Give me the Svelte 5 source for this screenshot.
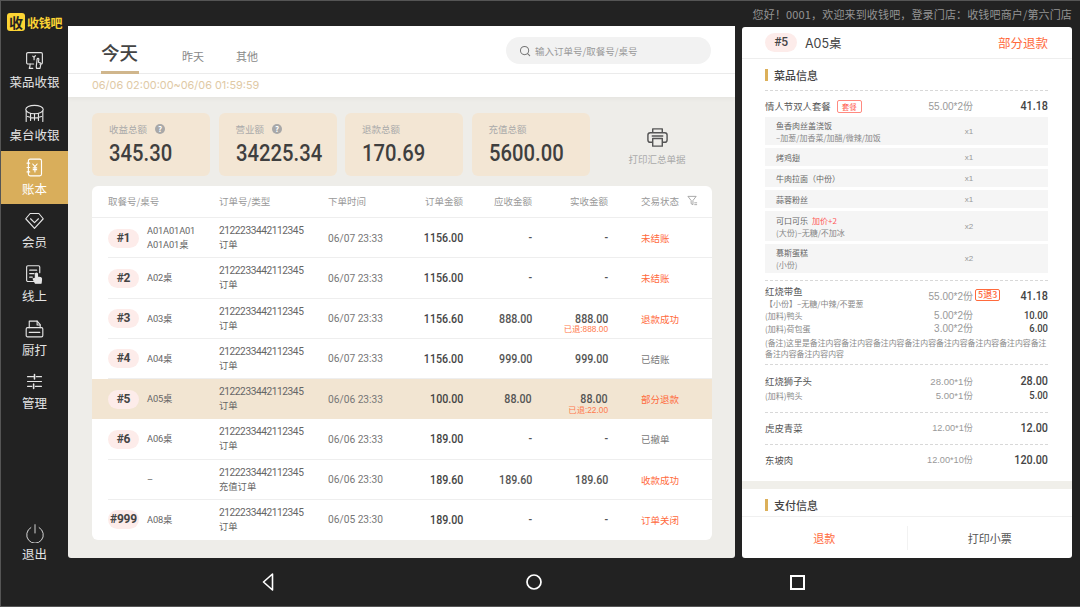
<script>
  const nav = [
    { key: 'dish', label: '菜品收银' },
    { key: 'table', label: '桌台收银' },
    { key: 'book', label: '账本', active: true },
    { key: 'vip', label: '会员' },
    { key: 'online', label: '线上' },
    { key: 'print', label: '厨打' },
    { key: 'manage', label: '管理' }
  ];
  const stats = [
    { label: '收益总额', value: '345.30', help: true },
    { label: '营业额', value: '34225.34', help: true },
    { label: '退款总额', value: '170.69' },
    { label: '充值总额', value: '5600.00' }
  ];
  const orderNo = '2122233442112345';
  const rows = [
    { no: '#1', name: 'A01A01A01', name2: 'A01A01桌', type: '订单', time: '06/07 23:33', amount: '1156.00', due: '-', paid: '-', status: '未结账', hot: true },
    { no: '#2', name: 'A02桌', type: '订单', time: '06/07 23:33', amount: '1156.00', due: '-', paid: '-', status: '未结账', hot: true },
    { no: '#3', name: 'A03桌', type: '订单', time: '06/07 23:33', amount: '1156.60', due: '888.00', paid: '888.00', refund: '已退:888.00', status: '退款成功', hot: true },
    { no: '#4', name: 'A04桌', type: '订单', time: '06/07 23:33', amount: '1156.00', due: '999.00', paid: '999.00', status: '已结账' },
    { no: '#5', name: 'A05桌', type: '订单', time: '06/06 23:33', amount: '100.00', due: '88.00', paid: '88.00', refund: '已退:22.00', status: '部分退款', hot: true, selected: true },
    { no: '#6', name: 'A06桌', type: '订单', time: '06/06 23:33', amount: '189.00', due: '-', paid: '-', status: '已撤单' },
    { no: '', name: '–', type: '充值订单', time: '06/06 23:30', amount: '189.60', due: '189.60', paid: '189.60', status: '收款成功', hot: true },
    { no: '#999', name: 'A08桌', type: '订单', time: '06/05 23:30', amount: '189.00', due: '-', paid: '-', status: '订单关闭', hot: true }
  ];
  const setItems = [
    { name: '鱼香肉丝盖浇饭', sub: '–加葱/加香菜/加醋/微辣/加饭', qty: 'x1' },
    { name: '烤鸡翅', qty: 'x1' },
    { name: '牛肉拉面（中份）', qty: 'x1' },
    { name: '蒜蓉粉丝', qty: 'x1' },
    { name: '可口可乐', extra: '加价+2', sub: '(大份)–无糖/不加冰', qty: 'x2' },
    { name: '慕斯蛋糕', sub: '(小份)', qty: 'x2' }
  ];
</script>

<div class="screen">
  <aside class="side">
    <div class="logo"><span class="logo-mark">收</span><span class="logo-text">收钱吧</span></div>
    <nav class="nav">
      {#each nav as item}
        <div class="nav-item" class:active={item.active}>
          <svg class="nav-icon" viewBox="0 0 24 24" fill="none" stroke="currentColor" stroke-width="1.3" stroke-linecap="round" stroke-linejoin="round">
            {#if item.key === 'dish'}
              <path d="M11 16H4.500A1.500 1.500 0 0 1 3 14.500v-10A1.500 1.500 0 0 1 4.500 3h15A1.500 1.500 0 0 1 21 4.500v10a1.500 1.500 0 0 1-1.500 1.500H18" />
              <path d="M6 21c1-2 1-3 1-5M7 21h3" />
              <path d="M14 19l1-8.500a1 1 0 0 1 2 0L16.500 14l2 .5c.8.2 1 .8.800 1.500l-1 5h-4z" />
              <path d="M10 7l1.500 1.500M13 6.500l-1.500 2M11.500 8.500v2.500" />
            {:else if item.key === 'table'}
              <ellipse cx="12" cy="7.500" rx="10" ry="4.800" />
              <path d="M2.500 9v12M21.500 9v12M7.500 12v8M12 12.500v7M16.500 12v8M4 15.500c4.500 1.800 11.500 1.800 16 0" />
            {:else if item.key === 'book'}
              <rect x="5" y="2.500" width="15" height="19" rx="2" />
              <path d="M3.500 7h3M3.500 12h3M3.500 17h3" />
              <path d="M10 8l2.500 3L15 8M12.500 11v6M10.500 12.500h4M10.500 14.500h4" />
            {:else if item.key === 'vip'}
              <path d="M7 4h10l5 6-10 11L2 10z" />
              <path d="M7.500 10l4.500 4.500 4.500-4.500" />
            {:else if item.key === 'online'}
              <path d="M11 20H4.500A1.500 1.500 0 0 1 3 18.500v-15A1.500 1.500 0 0 1 4.500 2h12A1.500 1.500 0 0 1 18 3.500V10" />
              <path d="M6.500 7h8M6.500 11h5M6.500 15h3" />
              <path d="M13 22l-2.500-5 1.500-.5 1 1V11.500a1.200 1.200 0 0 1 2.400 0V15l3.300.6c1 .2 1.500 1 1.300 2L19.500 22z" fill="currentColor" />
            {:else if item.key === 'print'}
              <path d="M6 11V3.500h9l3.500 4V11" />
              <path d="M15 3.500V8h3.500" />
              <path d="M2.500 12.500A1.500 1.500 0 0 1 4 11h16a1.500 1.500 0 0 1 1.500 1.500V20a1.500 1.500 0 0 1-1.500 1.500H4A1.500 1.500 0 0 1 2.500 20z" />
              <path d="M6 16.500h12" />
            {:else}
              <path d="M4 6.500h7M14 6.500h6M4 17.500h5M13 17.500h7M4 12h16" />
              <path d="M12 4v5M11 15v5" stroke-width="1.800" />
            {/if}
          </svg>
          <span class="nav-label">{item.label}</span>
        </div>
      {/each}
    </nav>
    <div class="nav-item logout">
      <svg class="nav-icon" viewBox="0 0 24 24" fill="none" stroke="currentColor" stroke-width="1.100" stroke-linecap="round">
        <path d="M7 5.500a10 10 0 1 0 10 0" />
        <path d="M12 2v10" />
      </svg>
      <span class="nav-label">退出</span>
    </div>
  </aside>

  <header class="topbar">您好！0001，欢迎来到收钱吧，登录门店：收钱吧商户/第六门店</header>

  <main class="main">
    <section class="head">
      <div class="tabs">
        <div class="tab current">今天</div>
        <div class="tab">昨天</div>
        <div class="tab">其他</div>
        <div class="search">
          <svg class="search-icon" viewBox="0 0 14 14" fill="none" stroke="#777" stroke-width="1.200" stroke-linecap="round"><circle cx="6.500" cy="6.500" r="4.800" /><path d="M10 10l2.500 2.500" /></svg>
          <span>输入订单号/取餐号/桌号</span>
        </div>
      </div>
      <div class="range">06/06 02:00:00~06/06 01:59:59</div>
    </section>

    <section class="content">
      <div class="stats">
        {#each stats as s}
          <div class="stat">
            <div class="stat-label">{s.label}{#if s.help}<span class="help">?</span>{/if}</div>
            <div class="stat-value">{s.value}</div>
          </div>
        {/each}
        <div class="summary">
          <svg class="summary-icon" viewBox="0 0 24 24" fill="none" stroke="#555" stroke-width="1.500" stroke-linejoin="round"><path d="M7 7V3h10v4" /><rect x="2" y="7" width="20" height="10" rx="2.500" /><rect x="7" y="13" width="10" height="8" fill="#eeede9" /><path d="M6 10.500h12" /></svg>
          <span>打印汇总单据</span>
        </div>
      </div>

      <div class="table">
        <div class="grid thead">
          <span>取餐号/桌号</span>
          <span>订单号/类型</span>
          <span>下单时间</span>
          <span class="r">订单金额</span>
          <span class="r">应收金额</span>
          <span class="r">实收金额</span>
          <span class="status-head">交易状态
            <svg class="filter" viewBox="0 0 12 12" fill="none" stroke="#999" stroke-width=".9" stroke-linejoin="round"><path d="M1 1.500h9L6.500 6v4.500L4.500 9.500V6z" /><path d="M8 8.500h3M8 10.500h3" /></svg>
          </span>
        </div>
        {#each rows as r}
          <div class="grid row" class:selected={r.selected}>
            <div class="who">
              <span class="badge" class:empty={!r.no}>{r.no}</span>
              <span class="who-name">{r.name}{#if r.name2}<br />{r.name2}{/if}</span>
            </div>
            <div class="order">{orderNo}<br /><span class="order-type">{r.type}</span></div>
            <div class="time">{r.time}</div>
            <div class="num strong"><span>{r.amount}</span></div>
            <div class="num"><span>{r.due}</span></div>
            <div class="num paid">
              <span>{r.paid}</span>
              {#if r.refund}<small>{r.refund}</small>{/if}
            </div>
            <div class="status" class:hot={r.hot}>{r.status}</div>
          </div>
        {/each}
      </div>
    </section>
  </main>

  <aside class="detail">
    <div class="detail-head">
      <span class="badge wide">#5</span>
      <span class="detail-name">A05桌</span>
      <span class="detail-state">部分退款</span>
    </div>
    <div class="detail-body">
      <div class="pad">
        <h3 class="sec-title">菜品信息</h3>
        <div class="dish-list first">
          <div class="line top-line">
            <span class="d-name">情人节双人套餐<em class="tag">套餐</em></span>
            <span class="d-price">55.00*2份</span>
            <span class="d-total">41.18</span>
          </div>
          {#each setItems as it}
            <div class="set-item" class:tall={it.sub && it.extra} class:mid={it.sub && !it.extra}>
              <div class="set-text">
                <div>{it.name}{#if it.extra}<em class="extra">{it.extra}</em>{/if}</div>
                {#if it.sub}<div class="set-sub">{it.sub}</div>{/if}
              </div>
              <span class="set-qty">{it.qty}</span>
            </div>
          {/each}
        </div>

        <div class="dish-list fish-list">
          <div class="line fish">
            <div class="d-name">红烧带鱼<div class="d-sub">【小份】–无糖/中辣/不要葱</div></div>
            <span class="d-price">55.00*2份<em class="tag-refund">5退3</em></span>
            <span class="d-total">41.18</span>
          </div>
          <div class="line addon"><span class="d-sub">(加料)鸭头</span><span class="d-price">5.00*2份</span><span class="d-total">10.00</span></div>
          <div class="line addon"><span class="d-sub">(加料)荷包蛋</span><span class="d-price">3.00*2份</span><span class="d-total">6.00</span></div>
          <p class="memo">(备注)这里是备注内容备注内容备注内容备注内容备注内容备注内容备注内容备注<br />备注内容备注内容内容</p>
        </div>

        <div class="dish-list lion-list">
          <div class="line"><span class="d-name">红烧狮子头</span><span class="d-price mid-price">28.00*1份</span><span class="d-total">28.00</span></div>
          <div class="line addon gap"><span class="d-sub">(加料)鸭头</span><span class="d-price mid-price">5.00*1份</span><span class="d-total">5.00</span></div>
        </div>

        <div class="dish-list plain">
          <div class="line"><span class="d-name">虎皮青菜</span><span class="d-price small-price">12.00*1份</span><span class="d-total">12.00</span></div>
        </div>
        <div class="dish-list plain last">
          <div class="line"><span class="d-name">东坡肉</span><span class="d-price small-price">12.00*10份</span><span class="d-total">120.00</span></div>
        </div>
      </div>
      <div class="band"></div>
      <div class="pad"><h3 class="sec-title">支付信息</h3></div>
    </div>
    <div class="detail-foot">
      <button class="foot-btn hot">退款</button>
      <button class="foot-btn">打印小票</button>
    </div>
  </aside>

  <footer class="sysbar">
    <svg class="sys-back" viewBox="0 0 12 18" fill="none" stroke="#fff" stroke-width="1.600" stroke-linejoin="round"><path d="M10.500 1L1.500 9l9 8z" /></svg>
    <svg class="sys-home" viewBox="0 0 16 16" fill="none" stroke="#fff" stroke-width="1.700"><circle cx="8" cy="8" r="7" /></svg>
    <span class="sys-recent"></span>
  </footer>
</div>

<style>
  :global(body) { margin: 0; background: #222; }
  .screen {
    box-sizing: border-box;
    width: 1080px;
    height: 607px;
    overflow: hidden;
    background: #222;
    border: 1px solid #555;
    border-right: 0;
    display: grid;
    grid-template-columns: 67px 667px 330px 1fr;
    grid-template-rows: 26px 531px 1fr;
    font-family: "Noto Sans CJK SC", "Noto Sans", sans-serif;
    color: #444;
  }
  .side { grid-row: 1 / 3; grid-column: 1; display: flex; flex-direction: column; }
  .logo { display: flex; align-items: center; gap: 2px; padding: 9px 0 0 6px; height: 33px; box-sizing: border-box; flex: none; }
  .logo-mark { width: 18px; height: 18px; border-radius: 3px; background: #fcd434; color: #222; font-size: 14px; font-weight: 700; line-height: 18px; text-align: center; }
  .logo-text { color: #fcd434; font-size: 12px; font-weight: 700; letter-spacing: -.2px; }
  .nav { display: flex; flex-direction: column; margin-top: 9.600px; }
  .nav-item { height: 53.600px; flex: none; display: flex; flex-direction: column; align-items: center; color: #e4e4e4; }
  .nav-item.active { background: #d9ae5b; color: #fff; }
  .nav-icon { width: 21px; height: 21px; margin-top: 6px; display: block; }
  .nav-label { font-size: 12.500px; line-height: 15px; margin-top: 3px; white-space: nowrap; }
  .logout { margin-top: auto; margin-bottom: -10px; }
  .logout .nav-icon { width: 20px; height: 20px; margin-top: 9px; }

  .topbar { grid-column: 2 / 5; grid-row: 1; color: #949494; font-size: 11px; letter-spacing: .15px; text-align: right; line-height: 26px; white-space: nowrap; padding-right: 8px; }

  .main { grid-column: 2; grid-row: 2; display: flex; flex-direction: column; background: #eeede9; border-radius: 0 0 3px 3px; overflow: hidden; margin-top: -1px; }
  .head { background: #fff; box-shadow: 0 2px 4px rgba(0,0,0,.04); height: 71px; flex: none; }
  .tabs { height: 48px; box-sizing: border-box; border-bottom: 1px solid #ebebeb; display: flex; align-items: flex-end; padding-left: 33px; gap: 31px; }
  .tab { font-size: 11px; color: #888; line-height: 38px; margin-right: 1px; margin-bottom: -2px; }
  .tab.current { font-size: 18.500px; font-weight: 500; color: #444; width: 38px; line-height: 34px; height: 36px; border-bottom: 3px solid #d0b68c; margin-right: 12px; margin-bottom: -1px; white-space: nowrap; }
  .search { margin-left: auto; margin-right: 24px; margin-bottom: 9px; width: 205px; height: 27px; border-radius: 14px; background: #f2f2f2; display: flex; align-items: center; gap: 4px; padding: 0 0 0 13px; box-sizing: border-box; font-size: 9.500px; color: #999; }
  .search-icon { width: 12px; height: 12px; }
  .range { padding-left: 24px; font-family: "Inter", "Noto Sans", sans-serif; font-size: 10.900px; color: #e0c9a5; line-height: 23px; white-space: nowrap; }

  .content { padding: 16px 23px 18px 24px; display: flex; flex-direction: column; gap: 10px; flex: 1; min-height: 0; }
  .stats { display: flex; gap: 8.500px; height: 63px; flex: none; }
  .stat { width: 118px; flex: none; background: #f3e6d4; border-radius: 6px; padding: 9px 0 0 17px; box-sizing: border-box; }
  .stat-label { font-size: 9.500px; line-height: 14px; color: #aaa; display: flex; align-items: center; gap: 8px; }
  .help { width: 10px; height: 10px; border-radius: 50%; background: #a8a8a8; color: #fff; font-size: 8px; line-height: 10px; text-align: center; font-weight: 700; }
  .stat-value { font-family: "Roboto", sans-serif; font-weight: 500; font-size: 23px; line-height: 30px; color: #3f3f3f; margin-top: 3px; transform: scaleX(.88); transform-origin: left center; white-space: nowrap; }
  .summary { flex: 1; display: flex; flex-direction: column; align-items: center; color: #aaa; font-size: 9.500px; padding: 13px 0 0 4px; box-sizing: border-box; }
  .summary-icon { width: 23px; height: 23px; }
  .summary span { margin-top: 3px; line-height: 14px; }

  .table { background: #fff; border-radius: 6px; flex: 1; display: flex; flex-direction: column; overflow: hidden; min-height: 0; }
  .grid { display: grid; grid-template-columns: 111px 109px 70px 65px 69px 76px 1fr; align-items: center; padding-left: 16px; }
  .thead { height: 32px; flex: none; font-size: 9.500px; color: #999; box-sizing: border-box; border-bottom: 1px solid #eee; padding-bottom: 2px; }
  .r { text-align: right; }
  .status-head { padding-left: 33px; display: flex; align-items: center; gap: 8px; white-space: nowrap; }
  .filter { width: 11px; height: 11px; flex: none; }
  .row { flex: 1; min-height: 0; background: linear-gradient(#eee, #eee) 16px 100% / 100% 1px no-repeat; }
  .row:last-child { background: none; }
  .row.selected { background: #f2e5d2; }
  .who { display: flex; align-items: center; gap: 8px; }
  .badge { width: 31px; height: 19px; flex: none; border-radius: 10px; background: #fdecea; color: #444; font-family: "Roboto", sans-serif; font-size: 12px; font-weight: 700; line-height: 19px; text-align: center; letter-spacing: -.2px; }
  .badge.empty { background: none; }
  .badge.wide { width: 32px; font-weight: 500; }
  .who-name { font-size: 9.300px; line-height: 14px; letter-spacing: -.15px; color: #666; }
  .order { font-size: 10.200px; letter-spacing: -.45px; line-height: 14px; color: #666; white-space: nowrap; }
  .order-type { font-size: 9.300px; letter-spacing: 0; }
  .time { font-size: 10.200px; color: #777; white-space: nowrap; }
  .order, .time, .who-name { font-family: "Roboto", "Noto Sans CJK SC", sans-serif; }
  .num { font-family: "Roboto", sans-serif; font-size: 12px; font-weight: 500; color: #555; display: flex; flex-direction: column; align-items: flex-end; line-height: 12px; }
  .num span { display: block; transform: scaleX(.89); transform-origin: right center; }
  .num.strong { color: #444; }
  .paid small { font-size: 8.300px; color: #ff7a4d; line-height: 8px; height: 8px; margin-top: .500px; margin-bottom: -8.500px; font-weight: 400; font-family: "Liberation Sans", "Noto Sans CJK SC", sans-serif; white-space: nowrap; }
  .status { padding-left: 33px; font-size: 9.500px; color: #777; }
  .status.hot { color: #ff6a3c; }

  .detail { grid-column: 3; grid-row: 2; margin-left: 7px; margin-right: -7px; background: #fff; border-radius: 3px; display: flex; flex-direction: column; overflow: hidden; }
  .detail-head { height: 32px; flex: none; box-sizing: border-box; border-bottom: 1px solid #eee; display: flex; align-items: center; padding: 0 24px 0 23px; }
  .detail-name { font-family: "Inter", "Noto Sans CJK SC", sans-serif; font-size: 12.500px; color: #444; margin-left: 8px; }
  .detail-state { margin-left: auto; color: #ff6a3c; font-size: 12.500px; }
  .detail-body { flex: 1; min-height: 0; overflow: hidden; }
  .pad { padding: 0 24px 0 23px; }
  .sec-title { margin: 0; font-size: 11px; font-weight: 500; line-height: 14px; color: #444; padding: 9px 0 0 9px; position: relative; height: 14px; }
  .sec-title::before { content: ""; position: absolute; left: 0; top: 10px; width: 3px; height: 12px; background: #dcb05a; }
  .dish-list { border-top: 1px dashed #d8d8d8; padding: 9px 0; }
  .dish-list.first { margin-top: 8px; padding: 8px 0 7px; }
  .dish-list.fish-list { padding: 3px 0 5.500px; }
  .dish-list.lion-list { padding-bottom: 10px; }
  .dish-list.plain { padding: 8px 0 9px; }
  .dish-list.last { padding-bottom: 0; }
  .line { display: grid; grid-template-columns: 1fr 90px 75px; align-items: center; min-height: 14px; }
  .top-line { margin-bottom: 4px; }
  .d-name { font-size: 9.400px; color: #555; line-height: 14px; white-space: nowrap; }
  .tag { font-style: normal; font-size: 7.500px; color: #ff5a4d; border: 1px solid #ff8a80; border-radius: 2px; padding: 0 4px; margin-left: 6px; line-height: 11px; display: inline-block; }
  .d-price { font-family: "Liberation Sans", "Noto Sans CJK SC", sans-serif; font-size: 10px; line-height: 13px; color: #999; text-align: right; white-space: nowrap; position: relative; }
  .mid-price { font-size: 9.600px; }
  .small-price { font-size: 9.200px; }
  .d-total { font-family: "Roboto", sans-serif; font-size: 12px; line-height: 13px; font-weight: 500; color: #444; text-align: right; transform: scaleX(.9); transform-origin: right center; }
  .d-sub { font-size: 8px; color: #888; line-height: 10px; white-space: nowrap; }
  .set-item { background: #f5f5f5; height: 18px; margin-top: 3px; display: grid; grid-template-columns: 1fr 50px 54px; align-items: center; padding-left: 11px; font-size: 8px; color: #666; line-height: 11px; }
  .set-item.tall { height: 30px; }
  .set-item.mid { height: 29px; }
  .set-item:nth-child(2) { height: 28px; margin-top: 0; }
  .set-sub { color: #888; margin-top: 1px; }
  .set-qty { font-family: "Liberation Sans", sans-serif; color: #999; text-align: center; font-size: 8px; }
  .extra { font-style: normal; color: #ff5a5a; margin-left: 4px; }
  .fish .d-sub { margin-top: 1px; }
  .tag-refund { position: absolute; left: 100%; top: -1px; font-style: normal; font-weight: 500; margin-left: 2px; font-size: 9px; color: #ff6a3c; border: 1px solid #ff6a3c; border-radius: 2px; padding: 0 2px; line-height: 10px; white-space: nowrap; font-family: "Noto Sans CJK SC", sans-serif; }
  .addon { min-height: 13px; }
  .addon .d-total { font-size: 10.500px; }
  .addon.gap { margin-top: 1px; }
  .memo { margin: 1.500px 0 0; font-size: 7.900px; line-height: 11px; color: #888; white-space: nowrap; }
  .band { height: 8px; background: #f0efea; margin-top: 14px; }
  .detail-foot { height: 42px; flex: none; display: flex; align-items: center; border-top: 1px solid #f0f0f0; box-sizing: border-box; }
  .foot-btn { flex: 1; height: 24px; background: none; border: 0; padding: 0; font: inherit; font-size: 11px; color: #555; }
  .foot-btn.hot { color: #ff6a3c; border-right: 1px solid #f2f2f2; }

  .sysbar { grid-column: 1 / 5; grid-row: 3; display: flex; align-items: center; padding-left: 261px; }
  .sys-back { width: 12px; height: 18px; margin-right: 252px; flex: none; }
  .sys-home { width: 16px; height: 16px; margin-right: 248px; flex: none; }
  .sys-recent { width: 11px; height: 11px; border: 2px solid #fff; flex: none; }
</style>
